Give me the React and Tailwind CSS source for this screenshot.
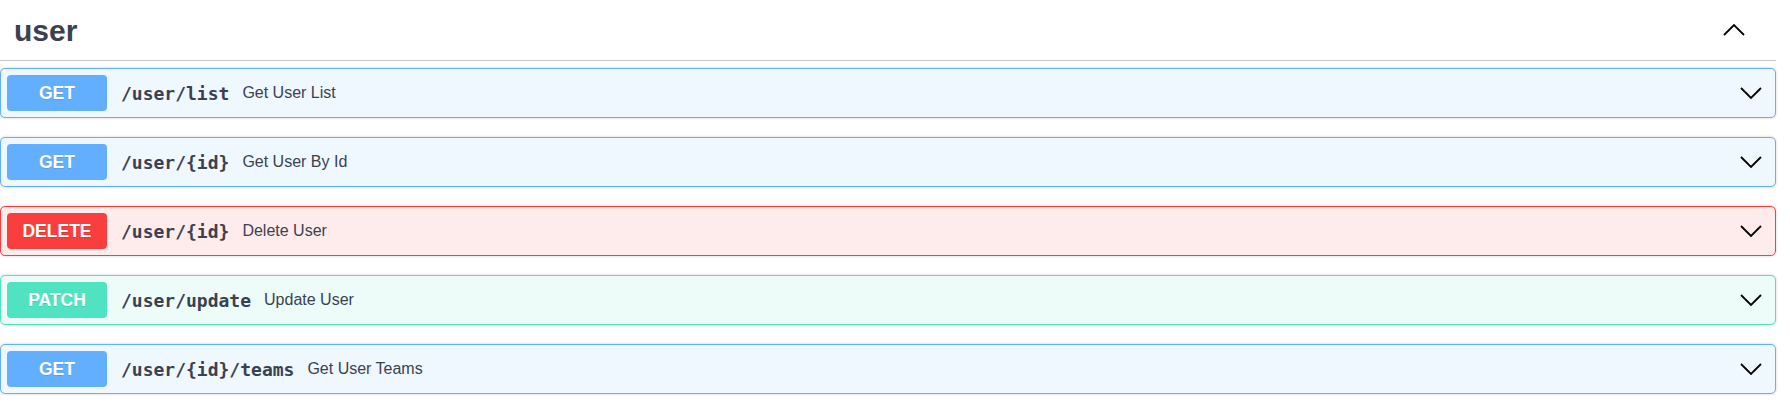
const ops = [
  { method: 'GET', path: '/user/list', summary: 'Get User List' },
  { method: 'GET', path: '/user/{id}', summary: 'Get User By Id' },
  { method: 'DELETE', path: '/user/{id}', summary: 'Delete User' },
  { method: 'PATCH', path: '/user/update', summary: 'Update User' },
  { method: 'GET', path: '/user/{id}/teams', summary: 'Get User Teams' },
]

const styles = {
  GET: { block: 'bg-[#eff7ff] border-[#61affe]', badge: 'bg-[#61affe]' },
  DELETE: { block: 'bg-[#feebeb] border-[#f93e3e]', badge: 'bg-[#f93e3e]' },
  PATCH: { block: 'bg-[#edfcf9] border-[#50e3c2]', badge: 'bg-[#50e3c2]' },
}

const Chevron = ({ up }) => (
  <svg width="24" height="14" viewBox="0 0 24 14" className="shrink-0">
    <path
      d={up ? 'M2 12 L12 2 L22 12' : 'M2 2 L12 12 L22 2'}
      fill="none"
      stroke="#000"
      strokeWidth="1.8"
    />
  </svg>
)

const Operation = ({ op }) => {
  const s = styles[op.method]
  return (
    <div className={`mb-[19px] rounded-[5px] border ${s.block} shadow-[0_0_3px_rgba(0,0,0,0.19)]`}>
      <div className="flex items-center p-[6px] pr-[12px]">
        <span
          className={`w-[100px] h-[36px] flex items-center justify-center rounded-[4px] text-white font-bold text-[17.5px] ${s.badge}`}
          style={{ textShadow: '0 1px 0 rgba(0,0,0,0.1)' }}
        >
          {op.method}
        </span>
        <span className="pl-[14px] pr-[13px] font-bold text-[18px] text-[#3b4151] font-['DejaVu_Sans_Mono',monospace]">
          {op.path}
        </span>
        <span className="flex-1 text-[16px] text-[#3b4151]">{op.summary}</span>
        <Chevron />
      </div>
    </div>
  )
}

export default function App() {
  return (
    <div className="w-[1776px] bg-white font-['Liberation_Sans',Arial,sans-serif]">
      {/* Tag header */}
      <div className="h-[61px] mb-[7px] flex items-center justify-between border-b border-[#c8c9cc] pl-[14px] pr-[30px]">
        <h3 className="text-[30px] font-bold text-[#3b4151]">user</h3>
        <Chevron up />
      </div>

      {/* Operations */}
      <div>
        {ops.map((op, i) => (
          <Operation key={i} op={op} />
        ))}
      </div>
    </div>
  )
}
